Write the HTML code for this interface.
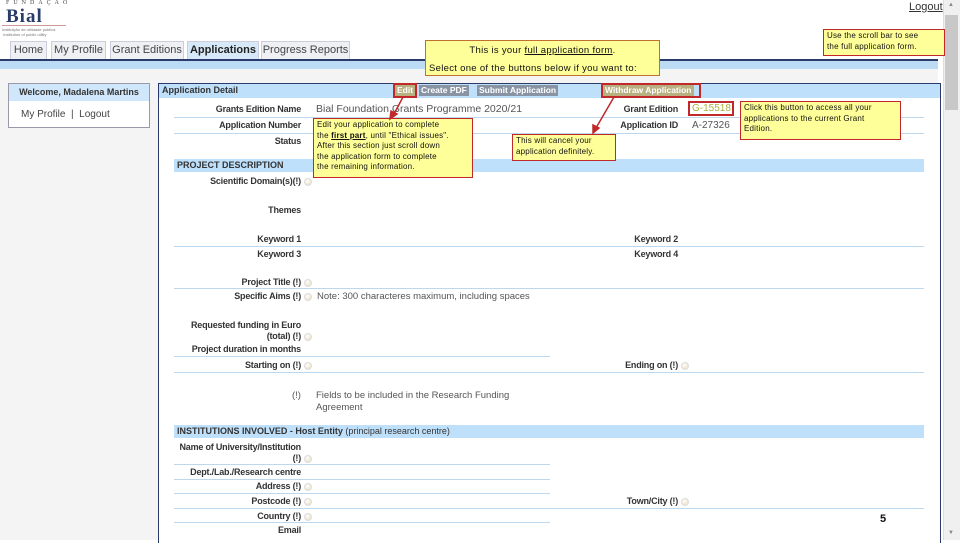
<!DOCTYPE html>
<html><head><meta charset="utf-8"><style>
*{margin:0;padding:0;box-sizing:border-box}
body{width:960px;height:540px;overflow:hidden;background:#fff;font-family:"Liberation Sans",sans-serif;position:relative;color:#333}
.a{position:absolute}
.tab{position:absolute;top:41px;height:18px;border:1px solid #ccd;border-bottom:none;background:#eef0f4;font-size:11px;color:#444;text-align:center;line-height:17px}
.lbl{position:absolute;font-size:9px;font-weight:bold;color:#333;text-align:right;letter-spacing:-0.2px}
.val{position:absolute;font-size:10px;color:#555}
.ln{position:absolute;height:1px;background:#bcd8ee}
.d{position:absolute;width:8px;height:8px;border-radius:50%;background:radial-gradient(circle at 40% 35%,#fff,#e8d8b8);border:1px solid #ddd}
.call{position:absolute;background:#ffff99;border:1.5px solid #c0282a;font-size:8px;color:#111;line-height:10.5px;padding:1px 3px;white-space:nowrap;letter-spacing:0.2px}
.sec{position:absolute;left:174px;width:750px;height:13px;background:#bfe0fb;font-size:9px;font-weight:bold;color:#333;line-height:13px;padding-left:3px}
.btn{position:absolute;top:85px;height:11px;background:#8894a4;color:#fff;font-size:8.5px;font-weight:bold;line-height:11px;padding:0 2px}
</style></head><body>
<div class="a" style="left:6px;top:0;font-size:6px;letter-spacing:4px;color:#444;font-family:'Liberation Serif',serif">FUNDAÇÃO</div>
<div class="a" style="left:6px;top:6px;font-size:19px;font-weight:bold;color:#2a3c6a;font-family:'Liberation Serif',serif;letter-spacing:1px">Bial</div>
<div class="a" style="left:2px;top:25px;width:64px;height:1px;background:#c99"></div>
<div class="a" style="left:2px;top:27px;font-size:4px;color:#777;line-height:5px">Instituição de utilidade pública<br>&nbsp;Institution of public utility</div>
<div class="tab" style="left:10px;width:37px">Home</div>
<div class="tab" style="left:51px;width:55px">My Profile</div>
<div class="tab" style="left:110px;width:74px">Grant Editions</div>
<div class="tab" style="left:187px;width:72px;background:#d7e8f8;font-weight:bold;color:#222">Applications</div>
<div class="tab" style="left:261px;width:89px">Progress Reports</div>
<div class="a" style="left:0;top:59px;width:938px;height:2px;background:#2a3a6a"></div>
<div class="a" style="left:0;top:61px;width:938px;height:8px;background:#bcdcf6"></div>
<div class="a" style="left:0;top:69px;width:938px;height:471px;background:#f4f4f4"></div>
<div class="a" style="left:909px;top:1px;font-size:11px;color:#333;text-decoration:underline">Logout</div>
<div class="a" style="left:943px;top:0;width:17px;height:540px;background:#f0f0f0;border-left:1px solid #ddd"></div>
<div class="a" style="left:945px;top:15px;width:13px;height:95px;background:#c8c8c8"></div>
<div class="a" style="left:948px;top:2px;font-size:6px;color:#888">▲</div>
<div class="a" style="left:948px;top:530px;font-size:6px;color:#888">▼</div>
<div class="a" style="left:8px;top:83px;width:142px;height:45px;background:#fff;border:1px solid #99a"></div>
<div class="a" style="left:9px;top:84px;width:140px;height:17px;background:#cfe6fb;font-size:9px;font-weight:bold;color:#333;text-align:center;line-height:17px">Welcome, Madalena Martins</div>
<div class="a" style="left:21px;top:109px;font-size:10px;color:#444">My Profile &nbsp;|&nbsp; Logout</div>
<div class="a" style="left:158px;top:83px;width:783px;height:460px;background:#fff;border:1px solid #2a3a6a;border-bottom:none"></div>
<div class="a" style="left:159px;top:84px;width:781px;height:14px;background:#bfe0fb"></div>
<div class="a" style="left:162px;top:85px;font-size:9px;font-weight:bold;color:#333">Application Detail</div>
<div class="btn" style="left:395px;background:#b8b080">Edit</div>
<div class="a" style="left:393px;top:83px;width:24px;height:15px;border:2px solid #c0282a"></div>
<div class="btn" style="left:419px">Create PDF</div>
<div class="btn" style="left:477px">Submit Application</div>
<div class="btn" style="left:603px;background:#b8b080">Withdraw Application</div>
<div class="a" style="left:601px;top:83px;width:100px;height:15px;border:2px solid #c0282a"></div>
<div class="lbl" style="left:170px;width:131px;top:104px">Grants Edition Name</div>
<div class="val" style="left:316px;top:103px;font-size:10.5px">Bial Foundation Grants Programme 2020/21</div>
<div class="lbl" style="left:560px;width:118px;top:104px">Grant Edition</div>
<div class="val" style="left:692px;top:103px;color:#aab040">G-15518</div>
<div class="a" style="left:688px;top:101px;width:46px;height:15px;border:2px solid #c0282a"></div>
<div class="ln" style="left:174px;top:117px;width:750px"></div>
<div class="lbl" style="left:170px;width:131px;top:120px">Application Number</div>
<div class="lbl" style="left:560px;width:118px;top:120px">Application ID</div>
<div class="val" style="left:692px;top:120px">A-27326</div>
<div class="ln" style="left:174px;top:133px;width:750px"></div>
<div class="lbl" style="left:170px;width:131px;top:136px">Status</div>
<div class="sec" style="top:159px">PROJECT DESCRIPTION</div>
<div class="lbl" style="left:170px;width:131px;top:176px">Scientific Domain(s)(!)</div><div class="d" style="left:304px;top:178px"></div>
<div class="lbl" style="left:170px;width:131px;top:205px">Themes</div>
<div class="lbl" style="left:170px;width:131px;top:234px">Keyword 1</div>
<div class="lbl" style="left:560px;width:118px;top:234px">Keyword 2</div>
<div class="ln" style="left:174px;top:246px;width:750px"></div>
<div class="lbl" style="left:170px;width:131px;top:249px">Keyword 3</div>
<div class="lbl" style="left:560px;width:118px;top:249px">Keyword 4</div>
<div class="lbl" style="left:170px;width:131px;top:277px">Project Title (!)</div><div class="d" style="left:304px;top:279px"></div>
<div class="ln" style="left:174px;top:288px;width:750px"></div>
<div class="lbl" style="left:170px;width:131px;top:291px">Specific Aims (!)</div><div class="d" style="left:304px;top:293px"></div>
<div class="val" style="left:317px;top:291px;font-size:9.5px">Note: 300 characteres maximum, including spaces</div>
<div class="lbl" style="left:170px;width:131px;top:320px;line-height:11px">Requested funding in Euro<br>(total) (!)</div><div class="d" style="left:304px;top:333px"></div>
<div class="lbl" style="left:170px;width:131px;top:344px">Project duration in months</div>
<div class="ln" style="left:174px;top:356px;width:376px"></div>
<div class="lbl" style="left:170px;width:131px;top:360px">Starting on (!)</div><div class="d" style="left:304px;top:362px"></div>
<div class="lbl" style="left:560px;width:118px;top:360px">Ending on (!)</div><div class="d" style="left:681px;top:362px"></div>
<div class="ln" style="left:174px;top:372px;width:750px"></div>
<div class="val" style="left:292px;top:390px;font-size:9.5px">(!)</div>
<div class="val" style="left:316px;top:390px;font-size:9.5px;line-height:12px">Fields to be included in the Research Funding<br>Agreement</div>
<div class="sec" style="top:425px;width:750px">INSTITUTIONS INVOLVED - Host Entity <span style="font-weight:normal">(principal research centre)</span></div>
<div class="lbl" style="left:170px;width:131px;top:442px;line-height:11px">Name of University/Institution<br>(!)</div><div class="d" style="left:304px;top:455px"></div>
<div class="ln" style="left:174px;top:464px;width:376px"></div>
<div class="lbl" style="left:170px;width:131px;top:467px">Dept./Lab./Research centre</div>
<div class="ln" style="left:174px;top:479px;width:376px"></div>
<div class="lbl" style="left:170px;width:131px;top:481px">Address (!)</div><div class="d" style="left:304px;top:483px"></div>
<div class="ln" style="left:174px;top:493px;width:376px"></div>
<div class="lbl" style="left:170px;width:131px;top:496px">Postcode (!)</div><div class="d" style="left:304px;top:498px"></div>
<div class="lbl" style="left:560px;width:118px;top:496px">Town/City (!)</div><div class="d" style="left:681px;top:498px"></div>
<div class="ln" style="left:174px;top:508px;width:750px"></div>
<div class="lbl" style="left:170px;width:131px;top:511px">Country (!)</div><div class="d" style="left:304px;top:513px"></div>
<div class="ln" style="left:174px;top:522px;width:376px"></div>
<div class="lbl" style="left:170px;width:131px;top:525px">Email</div>
<div class="a" style="left:880px;top:513px;font-size:11px;font-weight:bold;color:#111">5</div>
<div class="call" style="left:425px;top:40px;width:235px;height:36px;border-color:#c07030;font-size:9.5px;line-height:18px;padding:1px 3px;letter-spacing:0.3px"><div style="text-align:center">This is your <u>full application form</u>.</div>Select one of the buttons below if you want to:</div>
<div class="call" style="left:823px;top:29px;width:122px;height:27px">Use the scroll bar to see<br>the full application form.</div>
<div class="call" style="left:313px;top:118px;width:160px;height:60px">Edit your application to complete<br>the <u><b>first part</b></u>, until "Ethical issues".<br>After this section just scroll down<br>the application form to complete<br>the remaining information.</div>
<div class="call" style="left:512px;top:134px;width:104px;height:27px">This will cancel your<br>application definitely.</div>
<div class="call" style="left:740px;top:101px;width:161px;height:39px">Click this button to access all your<br>applications to the current Grant<br>Edition.</div>
<svg class="a" style="left:0;top:0" width="960" height="540"><g stroke="#c0282a" stroke-width="1.5" fill="#c0282a">
<line x1="403" y1="97" x2="394" y2="114"/><polygon points="390,119 391,111 397,114"/>
<line x1="614" y1="97" x2="596" y2="128"/><polygon points="593,133 593,125 599,128"/></g></svg>
</body></html>
